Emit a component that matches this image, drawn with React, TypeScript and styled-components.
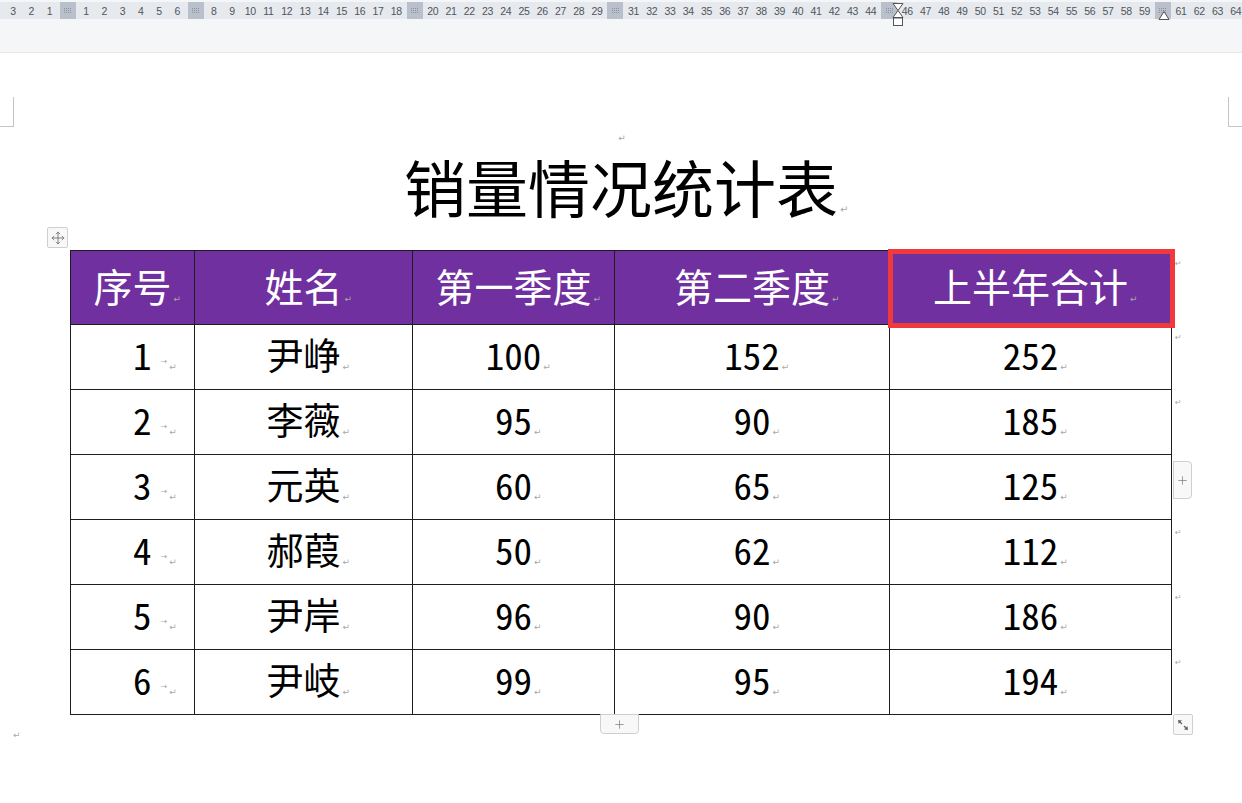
import React from "react";
import styled, { createGlobalStyle } from "styled-components";
import { Move, Plus } from "lucide-react";

const Global = createGlobalStyle`
  html, body { margin: 0; padding: 0; background: #fff; }
  body {
    font-family: "Noto Sans Mono CJK SC", "Noto Sans CJK SC", sans-serif;
    width: 1242px; height: 803px; overflow: hidden;
  }
`;

const Screen = styled.div`
  width: 1242px;
  height: 803px;
  display: flex;
  flex-direction: column;
  background: #fff;
  overflow: hidden;
`;

const RulerArea = styled.div`
  flex: none;
  height: 53px;
  background: #f5f6f7;
  border-bottom: 1px solid #e6e7ea;
  padding-top: 2px;
  box-sizing: border-box;
`;

const Ruler = styled.div`
  position: relative;
  height: 17px;
  background: #e6e9ed;
  display: flex;
  padding-left: 3.9px;
`;

const Slot = styled.div`
  flex: none;
  width: 18.25px;
  height: 17px;
  display: flex;
  align-items: center;
  justify-content: center;
  font-family: "Liberation Sans", sans-serif;
  font-size: 10.5px;
  color: #50555c;
  letter-spacing: -0.3px;
`;

const Block = styled.div`
  width: 16px;
  height: 17px;
  background: #b9bfcb;
  display: flex;
  align-items: center;
  justify-content: center;
`;

const Marker = styled.div<{ $left: number }>`
  position: absolute;
  top: 0;
  left: ${(p) => p.$left}px;
  line-height: 0;
`;

const Page = styled.div`
  flex: 1;
  display: flex;
  flex-direction: column;
`;

const CornerRow = styled.div`
  display: flex;
  justify-content: space-between;
  margin-top: 44px;
  height: 30px;
`;

const Corner = styled.div<{ $side: "left" | "right" }>`
  width: 14px;
  height: 30px;
  box-sizing: border-box;
  border-bottom: 1px solid #c4c4c4;
  ${(p) =>
    p.$side === "left"
      ? "border-right: 1px solid #c4c4c4;"
      : "border-left: 1px solid #c4c4c4;"}
`;

const ParaLine = styled.div`
  height: 14px;
  line-height: 14px;
  text-align: center;
  padding-left: 2px;
`;

const Title = styled.h1`
  margin: 0;
  height: 86px;
  line-height: 90px;
  text-align: center;
  font-size: 62px;
  font-weight: 400;
  color: #000;
  font-family: "Noto Sans CJK SC", sans-serif;
`;

const Mark = styled.span<{ $size?: number }>`
  display: inline-block;
  width: 0;
  margin-left: 2px;
  margin-right: -2px;
  font-family: "DejaVu Sans", sans-serif;
  font-size: ${(p) => p.$size ?? 9}px;
  font-weight: normal;
  color: #a8a8a8;
  line-height: 1;
  vertical-align: baseline;
  white-space: nowrap;
`;

const TabMark = styled.span`
  display: inline-block;
  margin-left: 9px;
  font-family: "DejaVu Sans", sans-serif;
  font-size: 8px;
  color: #a8a8a8;
  vertical-align: 6px;
  line-height: 1;
`;

const FreeMark = styled.span`
  font-family: "DejaVu Sans", sans-serif;
  font-size: 9px;
  color: #a8a8a8;
`;

const TableWrap = styled.div`
  position: relative;
  margin-top: 23px;
  margin-left: 70px;
  width: max-content;
`;

const Table = styled.table`
  border-collapse: collapse;
  table-layout: fixed;
`;

const HeadRow = styled.tr`
  height: 74px;
`;

const BodyRow = styled.tr`
  height: 65px;
`;

const HeadCell = styled.th`
  position: relative;
  padding: 0 0 5px 0;
  background: #7030a0;
  color: #fff;
  border: 1px solid #1d1d1d;
  font-size: 39px;
  font-weight: 400;
  line-height: 1;
  text-align: center;
  vertical-align: middle;
  font-family: "Noto Sans CJK SC", sans-serif;
`;

const Cell = styled.td<{ $indent?: boolean }>`
  padding: 0 0 5px ${(p) => (p.$indent ? "62px" : "0")};
  border: 1px solid #1d1d1d;
  font-size: 37px;
  line-height: 1;
  color: #000;
  text-align: ${(p) => (p.$indent ? "left" : "center")};
  vertical-align: middle;
`;

const RowEnd = styled.td`
  border: none;
  padding: 9px 0 0 3px;
  vertical-align: top;
  font-family: "DejaVu Sans", sans-serif;
  font-size: 8px;
  color: #a8a8a8;
  line-height: 1;
`;

const Highlight = styled.span`
  position: absolute;
  top: -2px;
  left: -2px;
  right: -4px;
  bottom: -4px;
  border: 5px solid #f0393b;
  pointer-events: none;
`;

const HandleBox = styled.div<{ $l: number; $t: number; $w: number; $h: number; $r?: string }>`
  position: absolute;
  left: ${(p) => p.$l}px;
  top: ${(p) => p.$t}px;
  width: ${(p) => p.$w}px;
  height: ${(p) => p.$h}px;
  box-sizing: border-box;
  border: 1px solid #cfcfcf;
  border-radius: ${(p) => p.$r ?? "2px"};
  background: #f8f8f8;
  display: flex;
  align-items: center;
  justify-content: center;
  color: #777;
`;

const EndPara = styled.div`
  margin-top: 10px;
  padding-left: 13px;
  line-height: 12px;
`;

const rulerItems: (number | "b")[] = [];
for (let v = -3; v <= 64; v++) {
  if ([0, 7, 19, 30, 45, 60].includes(v)) rulerItems.push("b");
  else rulerItems.push(Math.abs(v));
}

const BlockGlyph = () => (
  <svg width="7" height="6" viewBox="0 0 7 6">
    {[0, 2, 4, 6].map((x) => (
      <line key={x} x1={x + 0.5} y1="0" x2={x + 0.5} y2="6" stroke="#8b919e" strokeWidth="1" strokeDasharray="1 1" />
    ))}
  </svg>
);

const Hourglass = () => (
  <svg width="14" height="25" viewBox="0 0 14 25">
    <path d="M2 1.5 H12 L7 8.5 Z" fill="#fff" stroke="#555" strokeWidth="1" />
    <path d="M7 8.5 L12 15.5 H2 Z" fill="#fff" stroke="#555" strokeWidth="1" />
    <rect x="2.5" y="16" width="9" height="7.5" fill="#fff" stroke="#555" strokeWidth="1" />
  </svg>
);

const UpTriangle = () => (
  <svg width="14" height="19" viewBox="0 0 14 19">
    <path d="M7 9.5 L12 17.5 H2 Z" fill="#fff" stroke="#555" strokeWidth="1" />
  </svg>
);

const ResizeIcon = () => (
  <svg width="14" height="14" viewBox="0 0 14 14">
    <path d="M2 2 L6 2.6 L2.6 6 Z" fill="#666" />
    <line x1="3.5" y1="3.5" x2="6" y2="6" stroke="#666" strokeWidth="1.2" />
    <path d="M12 12 L8 11.4 L11.4 8 Z" fill="#666" />
    <line x1="10.5" y1="10.5" x2="8" y2="8" stroke="#666" strokeWidth="1.2" />
  </svg>
);

const headers = ["序号", "姓名", "第一季度", "第二季度", "上半年合计"];
const widths = [124, 218, 202, 275, 282, 14];
const rows: [number, string, number, number, number][] = [
  [1, "尹峥", 100, 152, 252],
  [2, "李薇", 95, 90, 185],
  [3, "元英", 60, 65, 125],
  [4, "郝葭", 50, 62, 112],
  [5, "尹岸", 96, 90, 186],
  [6, "尹岐", 99, 95, 194],
];

export default function App() {
  return (
    <Screen>
      <Global />
      <RulerArea>
        <Ruler>
          {rulerItems.map((it, i) => (
            <Slot key={i}>
              {it === "b" ? (
                <Block>
                  <BlockGlyph />
                </Block>
              ) : (
                it
              )}
            </Slot>
          ))}
          <Marker $left={891}>
            <Hourglass />
          </Marker>
          <Marker $left={1157}>
            <UpTriangle />
          </Marker>
        </Ruler>
      </RulerArea>
      <Page>
        <CornerRow>
          <Corner $side="left" />
          <Corner $side="right" />
        </CornerRow>
        <ParaLine>
          <FreeMark>↵</FreeMark>
        </ParaLine>
        <Title>
          销量情况统计表
          <Mark $size={10}>↵</Mark>
        </Title>
        <TableWrap>
          <Table>
            <colgroup>
              {widths.map((w, i) => (
                <col key={i} style={{ width: w }} />
              ))}
            </colgroup>
            <thead>
              <HeadRow>
                {headers.map((h, i) => (
                  <HeadCell key={h}>
                    {h}
                    <Mark>↵</Mark>
                    {i === headers.length - 1 && <Highlight />}
                  </HeadCell>
                ))}
                <RowEnd>↵</RowEnd>
              </HeadRow>
            </thead>
            <tbody>
              {rows.map((r) => (
                <BodyRow key={r[0]}>
                  <Cell $indent>
                    {r[0]}
                    <TabMark>→</TabMark>
                    <Mark>↵</Mark>
                  </Cell>
                  {r.slice(1).map((v, j) => (
                    <Cell key={j}>
                      {v}
                      <Mark>↵</Mark>
                    </Cell>
                  ))}
                  <RowEnd>↵</RowEnd>
                </BodyRow>
              ))}
            </tbody>
          </Table>
          <HandleBox $l={-23} $t={-23} $w={21} $h={21}>
            <Move size={14} strokeWidth={1.4} color="#666" />
          </HandleBox>
          <HandleBox $l={1103} $t={211} $w={19} $h={38} $r="0 4px 4px 0">
            <Plus size={13} strokeWidth={1.3} color="#777" />
          </HandleBox>
          <HandleBox $l={530} $t={464} $w={39} $h={20} $r="0 0 4px 4px">
            <Plus size={13} strokeWidth={1.3} color="#777" />
          </HandleBox>
          <HandleBox $l={1103} $t={464} $w={20} $h={21}>
            <ResizeIcon />
          </HandleBox>
        </TableWrap>
        <EndPara>
          <FreeMark>↵</FreeMark>
        </EndPara>
      </Page>
    </Screen>
  );
}
